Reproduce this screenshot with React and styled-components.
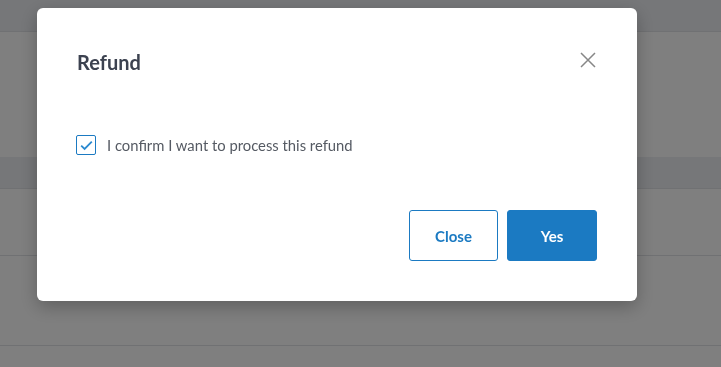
import styled, { createGlobalStyle } from "styled-components";

const GlobalStyle = createGlobalStyle`
  html, body {
    margin: 0;
    padding: 0;
    background: #ffffff;
    font-family: Lato, "Open Sans", sans-serif;
  }
`;

const Page = styled.div`
  width: 721px;
  height: 367px;
  overflow: hidden;
  background: #ffffff;
`;

const TableRow = styled.div`
  height: ${(p) => p.$h}px;
  background: ${(p) => (p.$head ? "#eceef2" : "#ffffff")};
  border-bottom: ${(p) => (p.$flat ? "none" : "1px solid #e0e2e6")};
`;

const Overlay = styled.div`
  position: fixed;
  inset: 0;
  background: rgba(0, 0, 0, 0.5);
  display: flex;
  align-items: flex-start;
  padding: 8px 0 0 37px;
`;

const Modal = styled.div`
  width: 600px;
  box-sizing: border-box;
  background: #ffffff;
  border-radius: 6px;
  padding: 42px 40px 40px 40px;
  box-shadow: 0 6px 18px rgba(0, 0, 0, 0.25);
  display: flex;
  flex-direction: column;
`;

const Header = styled.div`
  display: flex;
  justify-content: space-between;
  align-items: flex-start;
  height: 24px;
`;

const Title = styled.h2`
  margin: 0;
  font-size: 20px;
  line-height: 24px;
  font-weight: 700;
  color: #3c4250;
`;

const CloseIcon = styled.button`
  border: 0;
  background: none;
  padding: 0;
  margin: 2px 1px 0 0;
  width: 16px;
  height: 16px;
  cursor: pointer;
  display: block;
`;

const Body = styled.label`
  margin-top: 61px;
  display: flex;
  align-items: center;
  gap: 11px;
  font-size: 14.8px;
  color: #555a63;
`;

const Box = styled.span`
  width: 20px;
  height: 20px;
  box-sizing: border-box;
  border: 1px solid #1b7ac2;
  border-radius: 2px;
  display: flex;
  align-items: center;
  justify-content: center;
  margin-left: -1px;
`;

const Footer = styled.div`
  margin-top: 55px;
  display: flex;
  justify-content: flex-end;
  gap: 9px;
`;

const Button = styled.button`
  width: ${(p) => p.$w}px;
  height: 51px;
  border-radius: 3px;
  font-family: Lato, sans-serif;
  font-size: 15px;
  font-weight: 700;
  border: 1px solid #1b7ac2;
  background: ${(p) => (p.$primary ? "#1b7ac2" : "#ffffff")};
  color: ${(p) => (p.$primary ? "#ffffff" : "#1b7ac2")};
  cursor: pointer;
`;

export default function App() {
  return (
    <>
      <GlobalStyle />
      <Page>
        <TableRow $head $h={31} />
        <TableRow $flat $h={125} />
        <TableRow $head $h={31} />
        <TableRow $h={66} />
        <TableRow $h={89} />
      </Page>
      <Overlay>
        <Modal>
          <Header>
            <Title>Refund</Title>
            <CloseIcon aria-label="Close">
              <svg width="16" height="16" viewBox="0 0 16 16">
                <path d="M1 1L15 15M15 1L1 15" stroke="#878787" strokeWidth="1.5" />
              </svg>
            </CloseIcon>
          </Header>
          <Body>
            <Box>
              <svg width="13" height="11" viewBox="0 0 13 11">
                <path
                  d="M1.2 5.6L4.6 8.9L11.8 1.6"
                  fill="none"
                  stroke="#2b8ad0"
                  strokeWidth="1.8"
                />
              </svg>
            </Box>
            I confirm I want to process this refund
          </Body>
          <Footer>
            <Button $w={89}>Close</Button>
            <Button $w={90} $primary>
              Yes
            </Button>
          </Footer>
        </Modal>
      </Overlay>
    </>
  );
}
